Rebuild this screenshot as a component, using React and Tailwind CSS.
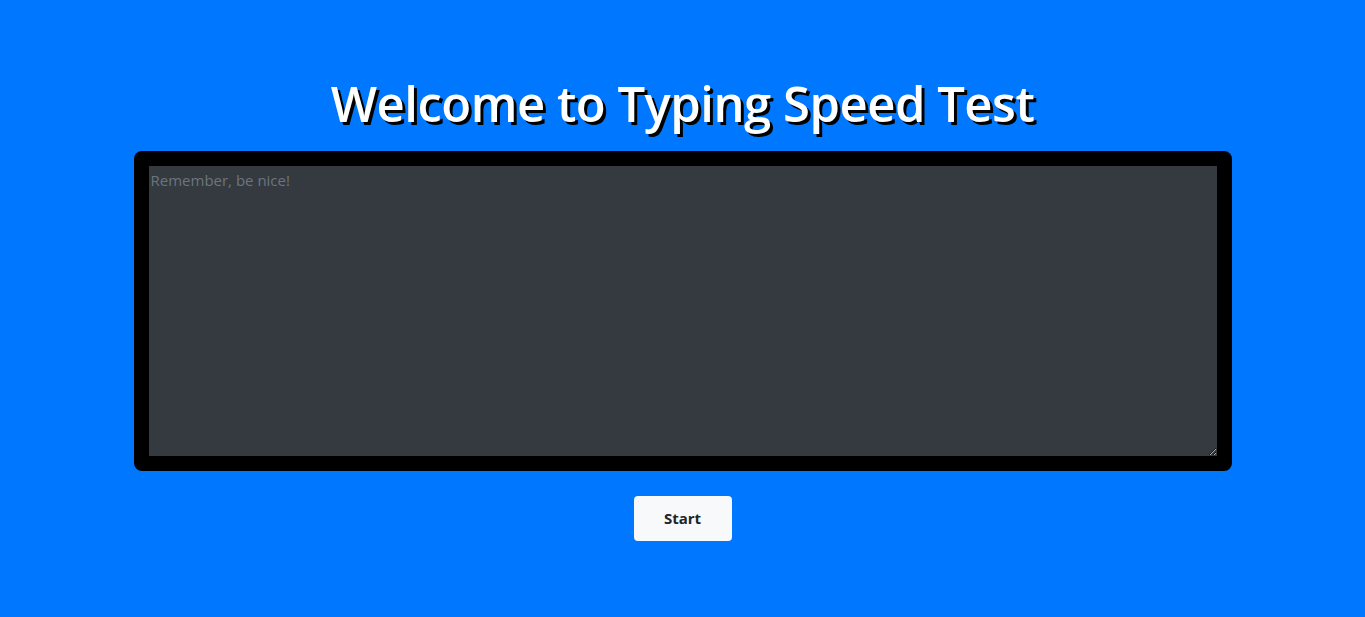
export default function App() {
  return (
    <div className="min-h-[617px] w-full bg-[#0077ff] flex flex-col items-center pt-[70px]" style={{ fontFamily: '"Open Sans", "Noto Sans", sans-serif' }}>
      <h1 className="text-[49px] leading-[67px] font-semibold text-white tracking-[-0.5px] [text-shadow:3px_3px_0_#000]">
        Welcome to Typing Speed Test
      </h1>
      <div className="mt-[14px] w-[1098px] bg-black rounded-[8px] p-[15px]">
        <textarea
          className="block w-full h-[290px] bg-[#343a40] text-white placeholder:text-[#6c757d] text-[15px] leading-[24px] px-[2px] py-[2px] outline-none resize-y"
          placeholder="Remember, be nice!"
        />
      </div>
      <button className="mt-[25px] w-[98px] h-[45px] bg-[#f8f9fa] rounded-[4px] text-[#212529] text-[15px] font-bold">
        Start
      </button>
    </div>
  );
}
